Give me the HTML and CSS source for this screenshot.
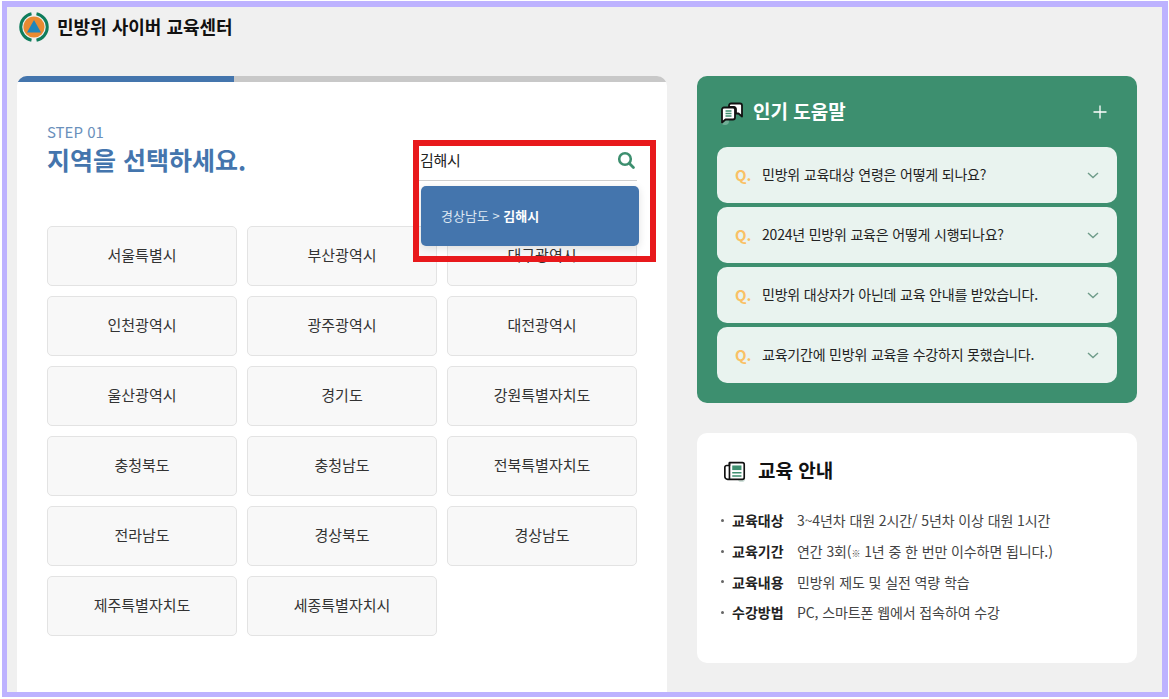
FILE: index.html
```html
<!DOCTYPE html>
<html lang="ko">
<head>
<meta charset="utf-8">
<title>민방위 사이버 교육센터</title>
<link rel="stylesheet" href="styles.css">
</head>
<body>
<div class="frame">
  <header class="top">
    <svg class="logo" width="30" height="30" viewBox="0 0 30 30">
      <circle cx="15" cy="15" r="10.6" fill="#e98a32"/>
      <path d="M12.5 1.700A13.600 13.600 0 0 0 12.500 28.300" fill="none" stroke="#0f7d5c" stroke-width="3"/>
      <path d="M17.500 1.700A13.600 13.600 0 0 1 17.500 28.300" fill="none" stroke="#0f7d5c" stroke-width="3"/>
      <path d="M15 8L22 20.500H8Z" fill="#1f86bd"/>
    </svg>
    <h1 class="site-title">민방위 사이버 교육센터</h1>
  </header>
  <div class="columns">
    <main class="card-main">
      <div class="progress"><div class="progress-fill"></div></div>
      <div class="main-body">
        <div class="head-row">
          <div class="heading">
            <p class="step">STEP 01</p>
            <h2 class="title">지역을 선택하세요.</h2>
          </div>
          <div class="search">
            <div class="search-row">
              <span class="search-text">김해시</span>
              <svg width="18" height="18" viewBox="0 0 18 18"><circle cx="8" cy="8" r="5.800" fill="none" stroke="#3d8f6f" stroke-width="2.600"/><path d="M12.500 12.500L16.400 16.400" stroke="#3d8f6f" stroke-width="2.800" stroke-linecap="round"/></svg>
            </div>
            <div class="suggest"><span class="suggest-text">경상남도 &gt; <b>김해시</b></span></div>
          </div>
        </div>
        <div class="regions">
          <button class="region">서울특별시</button>
          <button class="region">부산광역시</button>
          <button class="region">대구광역시</button>
          <button class="region">인천광역시</button>
          <button class="region">광주광역시</button>
          <button class="region">대전광역시</button>
          <button class="region">울산광역시</button>
          <button class="region">경기도</button>
          <button class="region">강원특별자치도</button>
          <button class="region">충청북도</button>
          <button class="region">충청남도</button>
          <button class="region">전북특별자치도</button>
          <button class="region">전라남도</button>
          <button class="region">경상북도</button>
          <button class="region">경상남도</button>
          <button class="region">제주특별자치도</button>
          <button class="region">세종특별자치시</button>
        </div>
      </div>
      <div class="annotation"></div>
    </main>
    <aside class="side">
      <section class="faq">
        <div class="faq-head">
          <svg class="faq-icon" width="26" height="26" viewBox="0 0 26 26">
            <circle cx="6" cy="21" r="4" fill="#6fae95"/>
            <path d="M10 5.500a2 2 0 0 1 2-2h9a2 2 0 0 1 2 2v11l-3.500-3H17V9a2 2 0 0 0-2-2h-5Z" fill="#fff" stroke="#111" stroke-width="1.800" stroke-linejoin="round"/>
            <path d="M3 9.500a2 2 0 0 1 2-2h9a2 2 0 0 1 2 2v8a2 2 0 0 1-2 2H6.500L3 22.500Z" fill="#fff" stroke="#111" stroke-width="1.800" stroke-linejoin="round"/>
            <path d="M6.500 11h6M6.500 13.500h6M6.500 16h6" stroke="#3d8f6f" stroke-width="1.300"/>
          </svg>
          <h3 class="faq-title">인기 도움말</h3>
          <svg class="plus" width="14" height="14" viewBox="0 0 14 14"><path d="M7 .5v13M.5 7h13" stroke="#fff" stroke-width="1.300"/></svg>
        </div>
        <ul class="faq-list">
          <li class="faq-item"><span class="q">Q.</span><span class="faq-text">민방위 교육대상 연령은 어떻게 되나요?</span><svg class="chev" width="12" height="7" viewBox="0 0 12 7"><path d="M1 1l5 4.500 5-4.500" fill="none" stroke="#6f9c8a" stroke-width="1.400"/></svg></li>
          <li class="faq-item"><span class="q">Q.</span><span class="faq-text">2024년 민방위 교육은 어떻게 시행되나요?</span><svg class="chev" width="12" height="7" viewBox="0 0 12 7"><path d="M1 1l5 4.500 5-4.500" fill="none" stroke="#6f9c8a" stroke-width="1.400"/></svg></li>
          <li class="faq-item"><span class="q">Q.</span><span class="faq-text">민방위 대상자가 아닌데 교육 안내를 받았습니다.</span><svg class="chev" width="12" height="7" viewBox="0 0 12 7"><path d="M1 1l5 4.500 5-4.500" fill="none" stroke="#6f9c8a" stroke-width="1.400"/></svg></li>
          <li class="faq-item"><span class="q">Q.</span><span class="faq-text">교육기간에 민방위 교육을 수강하지 못했습니다.</span><svg class="chev" width="12" height="7" viewBox="0 0 12 7"><path d="M1 1l5 4.500 5-4.500" fill="none" stroke="#6f9c8a" stroke-width="1.400"/></svg></li>
        </ul>
      </section>
      <section class="info">
        <div class="info-head">
          <svg class="info-icon" width="24" height="24" viewBox="0 0 26 26">
            <circle cx="20" cy="21" r="4" fill="#cfe0d9"/>
            <path d="M7 4h14a2 2 0 0 1 2 2v14a2 2 0 0 1-2 2H5a3 3 0 0 1-3-3V9a2 2 0 0 1 2-2h3Z" fill="#fff" stroke="#111" stroke-width="1.800" stroke-linejoin="round"/>
            <path d="M7 4v18" stroke="#111" stroke-width="1.800"/>
            <path d="M10 7h10v5H10Z" fill="#3d8f6f"/>
            <path d="M10 15h10M10 18.500h10" stroke="#3d8f6f" stroke-width="1.600"/>
          </svg>
          <h3 class="info-title">교육 안내</h3>
        </div>
        <dl class="info-list">
          <div class="info-row"><dt>교육대상</dt><dd>3~4년차 대원 2시간/ 5년차 이상 대원 1시간</dd></div>
          <div class="info-row"><dt>교육기간</dt><dd>연간 3회(<span class="mark">※</span> 1년 중 한 번만 이수하면 됩니다.)</dd></div>
          <div class="info-row"><dt>교육내용</dt><dd>민방위 제도 및 실전 역량 학습</dd></div>
          <div class="info-row"><dt>수강방법</dt><dd>PC, 스마트폰 웹에서 접속하여 수강</dd></div>
        </dl>
      </section>
    </aside>
  </div>
</div>
</body>
</html>
```
FILE: styles.css
```css
* { box-sizing: border-box; }
html, body { margin: 0; padding: 0; height: 100%; overflow: hidden; background: #fff; }
body {
  padding: 1px 1px 2px 2px;
  font-family: "Noto Sans CJK KR", "Noto Sans", sans-serif;
  color: #222;
}
h1, h2, h3, p, ul, dl, dd { margin: 0; padding: 0; }
ul { list-style: none; }

.frame {
  height: 696px;
  border: 5px solid #bdb2ff;
  border-width: 6px 6px 5px 5px;
  background: #f0f0f0;
  overflow: hidden;
}

.top {
  display: flex;
  align-items: center;
  gap: 8px;
  height: 39px;
  padding: 0 0 0 12px;
}
.logo { flex: none; }
.site-title {
  font-size: 18px;
  font-weight: 700;
  color: #111;
  line-height: 1;
  margin-top: -2px;
}

.columns {
  display: flex;
  align-items: flex-start;
  gap: 30px;
  padding: 30px 0 0 10px;
}

.card-main {
  position: relative;
  width: 650px;
  height: 620px;
  background: #fff;
  border-radius: 10px 10px 0 0;
  overflow: hidden;
}
.progress { height: 6px; background: #c8c8c8; }
.progress-fill { width: 217px; height: 100%; background: #4475ad; }

.main-body { padding: 0 30px; }

.head-row {
  display: flex;
  justify-content: space-between;
  align-items: flex-start;
  height: 144px;
  padding-top: 40px;
}
.step {
  font-size: 15px;
  line-height: 20px;
  color: #6a90bb;
}
.title {
  font-size: 25px;
  font-weight: 700;
  line-height: 34px;
  color: #4475ad;
}

.search {
  position: relative;
  z-index: 2;
  width: 220px;
  margin-top: 25px;
}
.search-row {
  display: flex;
  align-items: center;
  justify-content: space-between;
  height: 38px;
  padding: 0 2px 4px 3px;
  margin-top: -4px;
  border-bottom: 1px solid #cfcfcf;
  font-size: 15px;
  color: #222;
}
.search-text { letter-spacing: -0.3px; }
.suggest {
  position: absolute;
  left: 4px;
  top: 39px;
  width: 218px;
  height: 60px;
  padding-left: 20px;
  display: flex;
  align-items: center;
  background: #4475ad;
  border-radius: 5px;
  box-shadow: 0 2px 8px rgba(0, 0, 0, .12);
  color: #dde7f2;
  font-size: 13px;
}
.suggest-text { margin-top: -2px; white-space: pre-wrap; }
.suggest b { color: #fff; font-weight: 700; }

.regions {
  display: grid;
  grid-template-columns: repeat(3, 190px);
  grid-auto-rows: 60px;
  gap: 10px;
}
.region {
  border: 1px solid #e3e3e3;
  border-radius: 5px;
  background: #f8f8f8;
  font: inherit;
  font-size: 15px;
  color: #333;
  padding: 0 0 4px;
}

.annotation {
  position: absolute;
  left: 396px;
  top: 64px;
  width: 243px;
  height: 122px;
  border: 6px solid #e8191c;
  z-index: 3;
}

.side {
  width: 440px;
  display: flex;
  flex-direction: column;
  gap: 30px;
}

.faq {
  height: 327px;
  padding: 20px 20px 0;
  background: #3d8f6f;
  border-radius: 10px;
}
.faq-head {
  display: flex;
  align-items: center;
  height: 32px;
  margin-bottom: 19px;
  padding: 0 10px 0 2px;
}
.faq-icon { margin-right: 8px; margin-top: 1px; }
.faq-title {
  flex: 1;
  font-size: 19px;
  font-weight: 700;
  color: #fff;
  margin-top: -3px;
}
.faq-list { display: flex; flex-direction: column; gap: 4px; }
.faq-item {
  display: flex;
  align-items: center;
  height: 56px;
  padding: 0 18px;
  background: #e9f3ef;
  border-radius: 10px;
  font-size: 14px;
  color: #222;
}
.q {
  width: 27px;
  font-weight: 700;
  font-size: 15px;
  color: #f9c165;
  margin-top: -2px;
}
.faq-text { flex: 1; letter-spacing: -0.2px; margin-top: -2px; }

.info {
  height: 230px;
  padding: 25px 24px 0 26px;
  background: #fff;
  border-radius: 10px;
}
.info-head {
  display: flex;
  align-items: center;
  gap: 11px;
  height: 26px;
  margin-bottom: 21px;
}
.info-title {
  font-size: 19px;
  font-weight: 700;
  color: #111;
  margin-top: -3px;
}
.info-list { display: flex; flex-direction: column; margin-left: -2px; }
.info-row {
  position: relative;
  display: flex;
  align-items: center;
  height: 30.700px;
  padding-left: 11px;
  font-size: 14px;
}
.info-row::before {
  content: "";
  position: absolute;
  left: 0;
  top: 14px;
  width: 3px;
  height: 3px;
  border-radius: 50%;
  background: #666;
}
.info-row dt { width: 65px; font-weight: 700; color: #222; }
.info-row dd { color: #444; letter-spacing: -0.1px; }
.mark { font-size: 9px; }
```
